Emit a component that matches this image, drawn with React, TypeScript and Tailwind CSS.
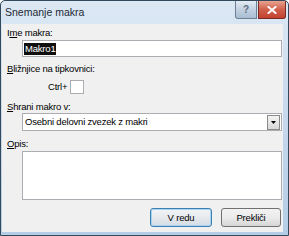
export default function App() {
  const font = { fontFamily: '"Liberation Sans", Arial, sans-serif' }
  return (
    <div className="w-[289px] h-[236px] overflow-hidden bg-white" style={font}>
      <div className="flex flex-col w-full h-full border border-[#34495a] rounded-t-[5px] bg-gradient-to-b from-[#dce8f4] via-[#c6d8ec] to-[#b4cde6]">
        {/* Title bar */}
        <div className="h-[23px] flex items-start shrink-0">
          <span className="pl-[4px] pt-[5px] text-[10.5px] leading-[12px] text-[#1e2a36]">Snemanje makra</span>
          <div className="ml-auto flex gap-[1px] pr-[2px]">
            <div className="w-[22px] h-[18px] rounded-bl-[3px] border border-t-0 border-[#6d7f93] bg-gradient-to-b from-[#e4ecf5] via-[#c3d1e1] to-[#a9bdd3] flex items-center justify-center">
              <span className="text-[10px] font-bold leading-none text-[#5c6f85]">?</span>
            </div>
            <div className="w-[28px] h-[18px] rounded-br-[3px] border border-t-0 border-[#7a2a22] bg-gradient-to-b from-[#e8a292] via-[#d0604b] to-[#c2432e] flex items-center justify-center">
              <svg width="10" height="8" viewBox="0 0 10 8">
                <path d="M1.5 1 L8.5 7 M8.5 1 L1.5 7" stroke="#ffffff" strokeWidth="2" strokeLinecap="square" />
              </svg>
            </div>
          </div>
        </div>

        {/* Client area */}
        <div className="flex-1 ml-[1px] mr-[5px] mb-[3px] bg-[#f0f0f0] flex flex-col pl-[5px] pr-[1px] text-[9.5px] tracking-[-0.2px] text-black">
          <div className="pt-[3px] h-[15px] leading-[12px]">
            I<span className="underline">m</span>e makra:
          </div>
          <div className="mt-[1px] ml-[15px] h-[17px] bg-white border border-[#abadb3] flex items-center pl-[1px]">
            <span className="bg-[#0f0f0f] text-white px-[1px] leading-[12px]">Makro1</span>
          </div>

          <div className="mt-[6px] h-[12px] leading-[12px]">
            <span className="underline">B</span>ližnjice na tipkovnici:
          </div>
          <div className="mt-[5px] flex items-center h-[14px]">
            <span className="ml-[41px] leading-[12px]">Ctrl+</span>
            <div className="ml-[3px] w-[14px] h-[14px] bg-white border border-[#abadb3]" />
          </div>

          <div className="mt-[7px] h-[12px] leading-[12px]">
            <span className="underline">S</span>hrani makro v:
          </div>
          <div className="ml-[15px] h-[18px] bg-white border border-[#abadb3] flex items-center">
            <span className="pl-[2px] leading-[12px]">Osebni delovni zvezek z makri</span>
            <div className="ml-auto mr-[1px] w-[13px] h-[15px] border border-[#8a8a8a] bg-gradient-to-b from-[#f4f4f4] to-[#d8d8d8] flex items-center justify-center">
              <svg width="5" height="3" viewBox="0 0 5 3">
                <path d="M0 0 H5 L2.5 3 Z" fill="#000" />
              </svg>
            </div>
          </div>

          <div className="mt-[7px] h-[12px] leading-[12px]">
            <span className="underline">O</span>pis:
          </div>
          <div className="mt-[1px] ml-[15px] h-[49px] bg-white border border-[#abadb3]" />

          <div className="mt-[8px] flex justify-end gap-[9px] pr-[1px]">
            <div className="w-[62px] h-[19px] rounded-[3px] border border-[#3c7fb1] bg-gradient-to-b from-[#f2f4f6] via-[#e6eaee] to-[#d4dbe2] flex items-center justify-center shadow-[inset_0_0_0_1px_#a8d4f0]">
              <span className="leading-[12px]">V redu</span>
            </div>
            <div className="w-[60px] h-[19px] rounded-[3px] border border-[#707070] bg-gradient-to-b from-[#f2f2f2] via-[#ebebeb] to-[#d6d6d6] flex items-center justify-center">
              <span className="leading-[12px]">Prekliči</span>
            </div>
          </div>
        </div>
      </div>
    </div>
  )
}
